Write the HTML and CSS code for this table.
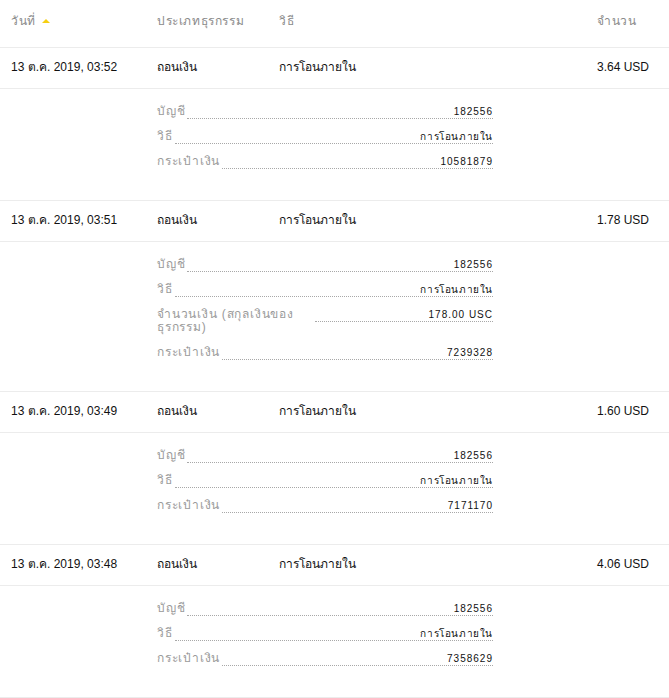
FILE: index.html
```html
<!DOCTYPE html>
<html lang="th">
<head>
<meta charset="utf-8">
<title>Transactions</title>
<link rel="stylesheet" href="styles.css">
</head>
<body>
<div class="table">
  <div class="row head">
    <div class="c-date">วันที่ <span class="caret"></span></div>
    <div class="c-type">ประเภทธุรกรรม</div>
    <div class="c-method">วิธี</div>
    <div class="c-amount">จำนวน</div>
  </div>

  <div class="row main">
    <div class="c-date">13 ต.ค. 2019, 03:52</div>
    <div class="c-type">ถอนเงิน</div>
    <div class="c-method">การโอนภายใน</div>
    <div class="c-amount">3.64 USD</div>
  </div>
  <div class="details">
    <div class="list">
      <div class="item"><span class="label">บัญชี</span><span class="value">182556</span></div>
      <div class="item"><span class="label">วิธี</span><span class="value th">การโอนภายใน</span></div>
      <div class="item"><span class="label">กระเป๋าเงิน</span><span class="value">10581879</span></div>
    </div>
  </div>

  <div class="row main">
    <div class="c-date">13 ต.ค. 2019, 03:51</div>
    <div class="c-type">ถอนเงิน</div>
    <div class="c-method">การโอนภายใน</div>
    <div class="c-amount">1.78 USD</div>
  </div>
  <div class="details">
    <div class="list">
      <div class="item"><span class="label">บัญชี</span><span class="value">182556</span></div>
      <div class="item"><span class="label">วิธี</span><span class="value th">การโอนภายใน</span></div>
      <div class="item"><span class="label">จำนวนเงิน (สกุลเงินของธุรกรรม)</span><span class="value">178.00 USC</span></div>
      <div class="item"><span class="label">กระเป๋าเงิน</span><span class="value">7239328</span></div>
    </div>
  </div>

  <div class="row main">
    <div class="c-date">13 ต.ค. 2019, 03:49</div>
    <div class="c-type">ถอนเงิน</div>
    <div class="c-method">การโอนภายใน</div>
    <div class="c-amount">1.60 USD</div>
  </div>
  <div class="details">
    <div class="list">
      <div class="item"><span class="label">บัญชี</span><span class="value">182556</span></div>
      <div class="item"><span class="label">วิธี</span><span class="value th">การโอนภายใน</span></div>
      <div class="item"><span class="label">กระเป๋าเงิน</span><span class="value">7171170</span></div>
    </div>
  </div>

  <div class="row main">
    <div class="c-date">13 ต.ค. 2019, 03:48</div>
    <div class="c-type">ถอนเงิน</div>
    <div class="c-method">การโอนภายใน</div>
    <div class="c-amount">4.06 USD</div>
  </div>
  <div class="details">
    <div class="list">
      <div class="item"><span class="label">บัญชี</span><span class="value">182556</span></div>
      <div class="item"><span class="label">วิธี</span><span class="value th">การโอนภายใน</span></div>
      <div class="item"><span class="label">กระเป๋าเงิน</span><span class="value">7358629</span></div>
    </div>
  </div>
</div>
</body>
</html>
```
FILE: styles.css
```css
html, body {
  margin: 0;
  padding: 0;
  background: #fff;
}
body {
  font-family: "Liberation Sans", Arial, sans-serif;
  font-size: 12px;
  color: #111;
}
.table {
  width: 669px;
}
.row {
  display: grid;
  grid-template-columns: 146px 122px 318px 1fr;
  padding-left: 11px;
  border-bottom: 1px solid #ececec;
  align-items: center;
}
.head {
  height: 48px;
  box-sizing: border-box;
  padding-bottom: 7px;
  color: #8a8a8a;
  letter-spacing: 0.6px;
}
.main {
  height: 41px;
  box-sizing: border-box;
  padding-bottom: 3px;
}
.caret {
  display: inline-block;
  width: 0;
  height: 0;
  border-left: 4px solid transparent;
  border-right: 4px solid transparent;
  border-bottom: 4px solid #f6cf12;
  margin-left: 2px;
  vertical-align: 2px;
}
.details {
  border-bottom: 1px solid #ececec;
  padding: 16px 0 31px 157px;
}
.list {
  width: 336px;
  display: flex;
  flex-direction: column;
  gap: 11px;
}
.item {
  display: flex;
  align-items: flex-start;
}
.label {
  max-width: 156px;
  color: #9a9a9a;
  line-height: 13px;
  padding-bottom: 1px;
  letter-spacing: 0.8px;
}
.value {
  flex: 1;
  margin-left: 2px;
  text-align: right;
  line-height: 13px;
  font-size: 10px;
  letter-spacing: 1px;
  color: #111;
  border-bottom: 1px dotted #a8a8a8;
  white-space: nowrap;
}
.value.th {
  letter-spacing: 0.6px;
}
```
